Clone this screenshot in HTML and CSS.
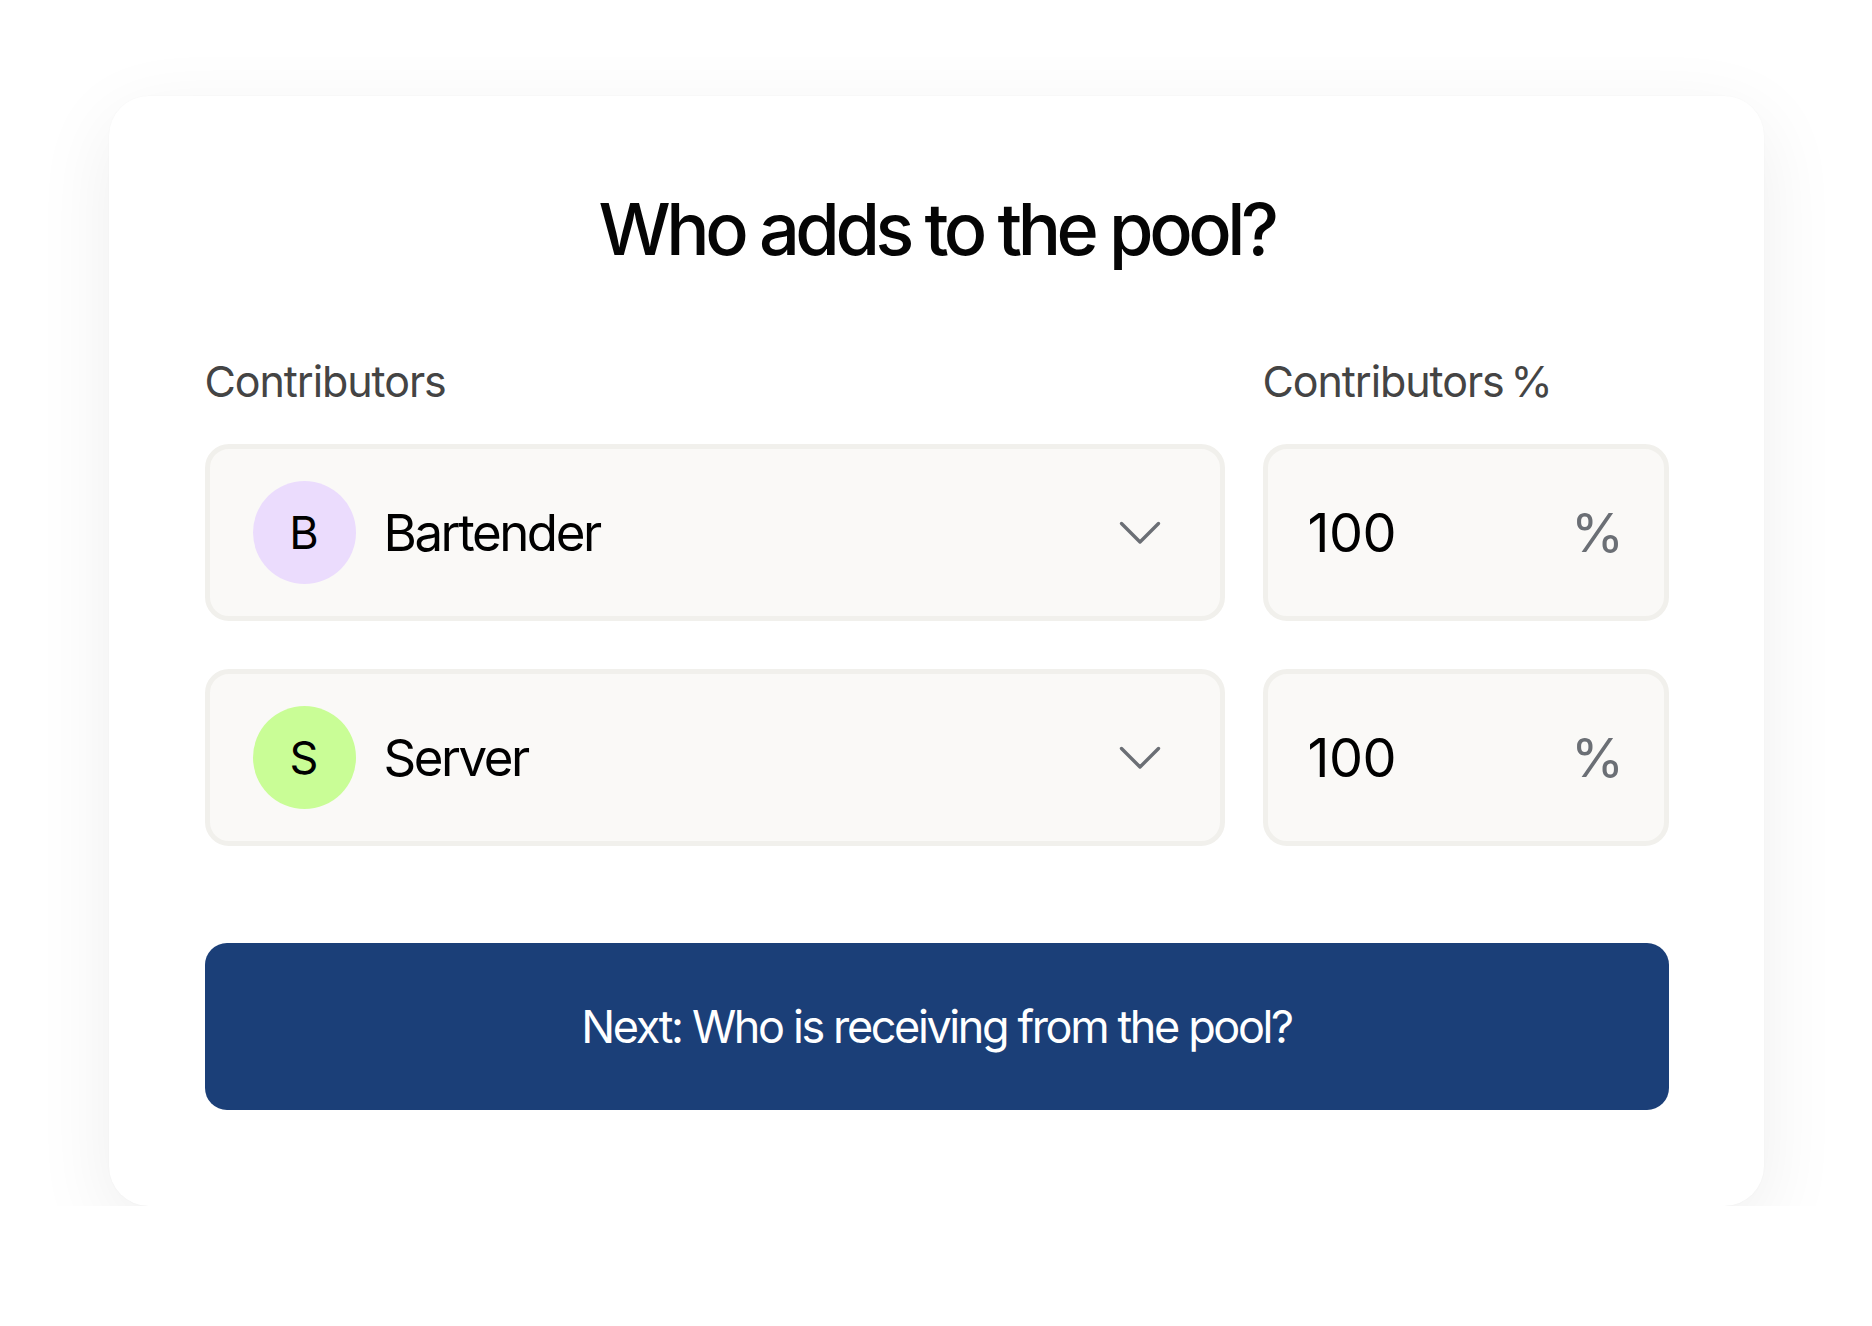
FILE: index.html
```html
<!DOCTYPE html>
<html lang="en">
<head>
<meta charset="utf-8">
<title>Who adds to the pool?</title>
<link rel="stylesheet" href="styles.css">
</head>
<body>
<main class="card">
  <h1 class="title">Who adds to the pool?</h1>
  <div class="grid">
    <div class="label">Contributors</div>
    <div class="label">Contributors<span class="tight"> </span>%</div>

    <div class="select">
      <span class="avatar avatar-b">B</span>
      <span class="select-text">Bartender</span>
      <svg class="chevron" width="42" height="24" viewBox="0 0 42 24" aria-hidden="true"><path d="M2.5 2.5 L21 21 L39.5 2.5" fill="none" stroke="#6b6f75" stroke-width="3.4" stroke-linecap="round" stroke-linejoin="round"/></svg>
    </div>
    <div class="pct">
      <span class="pct-value">100</span>
      <span class="pct-sign">%</span>
    </div>

    <div class="select">
      <span class="avatar avatar-s">S</span>
      <span class="select-text">Server</span>
      <svg class="chevron" width="42" height="24" viewBox="0 0 42 24" aria-hidden="true"><path d="M2.5 2.5 L21 21 L39.5 2.5" fill="none" stroke="#6b6f75" stroke-width="3.4" stroke-linecap="round" stroke-linejoin="round"/></svg>
    </div>
    <div class="pct">
      <span class="pct-value">100</span>
      <span class="pct-sign">%</span>
    </div>
  </div>
  <button class="next">Next: Who is receiving from the pool?</button>
</main>
</body>
</html>
```

FILE: styles.css
```css
* { box-sizing: border-box; }

html, body {
  margin: 0;
  padding: 0;
  background: #ffffff;
}

body {
  font-family: Inter, "Noto Sans", "Liberation Sans", sans-serif;
  color: #000;
}

.card {
  width: 1655px;
  height: 1110px;
  margin: 96px auto 0;
  padding: 97px 95px 0 96px;
  background: #ffffff;
  border-radius: 40px;
  box-shadow: 0 22px 80px rgba(0, 0, 0, 0.07), 0 0 2px rgba(0, 0, 0, 0.03);
}

.title {
  margin: 0;
  font-size: 72px;
  line-height: 72px;
  font-weight: 500;
  letter-spacing: -0.062em;
  text-align: center;
  color: #050505;
}

.grid {
  display: grid;
  grid-template-columns: 1fr 406px;
  column-gap: 38px;
  row-gap: 48px;
  margin-top: 95px;
}

.label {
  font-size: 43px;
  line-height: 42px;
  font-weight: 400;
  letter-spacing: -0.025em;
  color: #444444;
  margin-bottom: -6px;
}

.tight { letter-spacing: -0.12em; }

.select,
.pct {
  height: 177px;
  border: 5px solid #f1f0ec;
  background: #faf9f7;
  border-radius: 24px;
  display: flex;
  align-items: center;
}

.select {
  padding: 0 59px 0 43px;
}

.avatar {
  width: 103px;
  height: 103px;
  border-radius: 50%;
  flex: none;
  display: flex;
  align-items: center;
  justify-content: center;
  font-size: 45px;
  font-weight: 400;
  color: #000;
}

.avatar-b { background: #ebdcfd; }
.avatar-s { background: #c9fd96; }

.select-text {
  flex: 1;
  margin-left: 28px;
  font-size: 51px;
  font-weight: 400;
  letter-spacing: -0.048em;
  color: #000;
}

.chevron { flex: none; }

.pct {
  justify-content: space-between;
  padding: 0 40px 0 40px;
  font-size: 54px;
  letter-spacing: -0.01em;
}

.pct-value { color: #000; }
.pct-sign { color: #6b6f75; }

.next {
  display: block;
  width: 100%;
  height: 167px;
  margin-top: 97px;
  border: 0;
  border-radius: 22px;
  background: #1b3f78;
  color: #ffffff;
  font-family: inherit;
  font-size: 45px;
  font-weight: 400;
  letter-spacing: -0.053em;
}
```
